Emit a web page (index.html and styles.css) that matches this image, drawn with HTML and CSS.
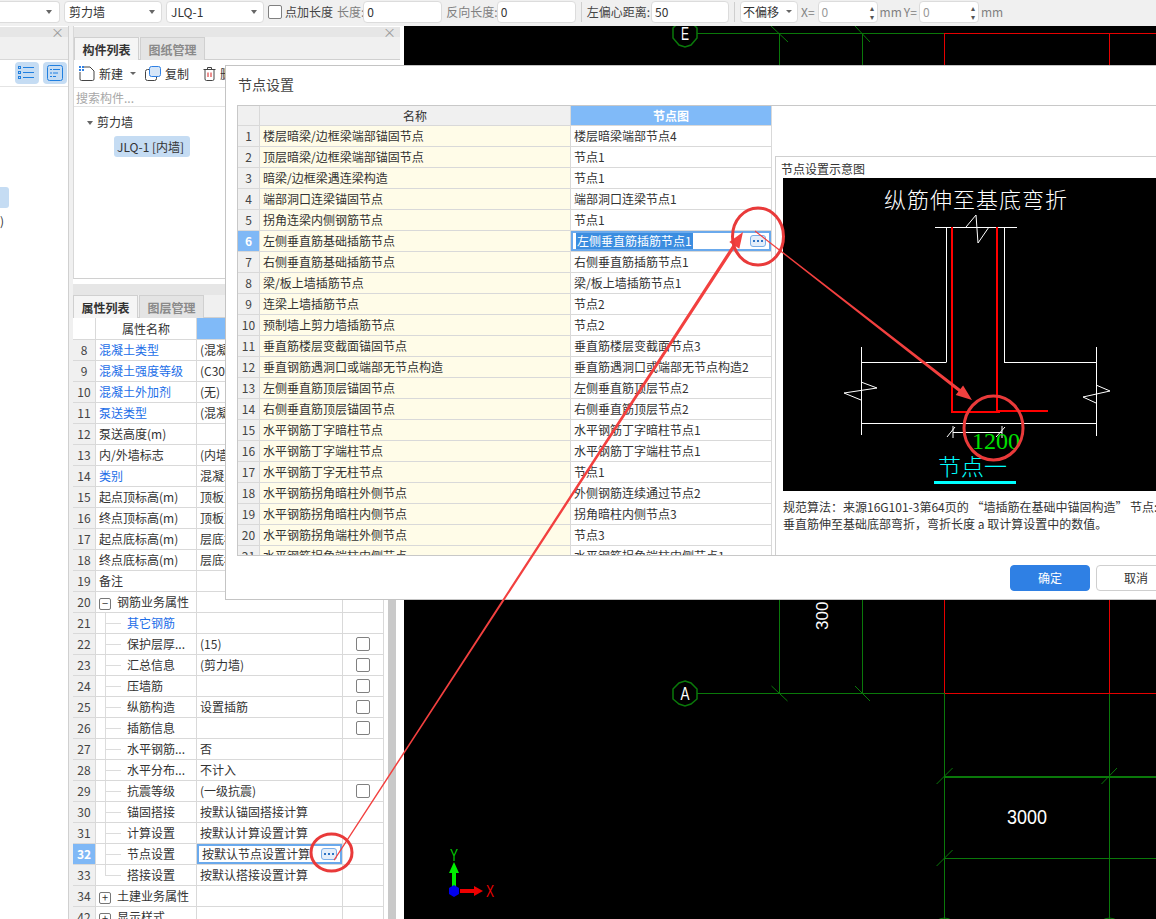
FILE: index.html
```html
<!DOCTYPE html>
<html lang="zh">
<head>
<meta charset="utf-8">
<title>节点设置</title>
<link rel="stylesheet" href="styles.css">
</head>
<body>
<div class="app">
  <div class="toolbar">
    <div class="sel sel-first"><span class="caret"></span></div>
    <div class="sel sel-w"><span>剪力墙</span><span class="caret"></span></div>
    <div class="sel sel-w"><span>JLQ-1</span><span class="caret"></span></div>
    <span class="chk"></span>
    <span class="tb-label tight">点加长度</span>
    <span class="tb-label dim gap-s">长度:</span>
    <div class="inp w-len">0</div>
    <span class="tb-label dim gap-s">反向长度:</span>
    <div class="inp w-rev">0</div>
    <span class="tb-sep"></span>
    <span class="tb-label gap-o">左偏心距离:</span>
    <div class="inp w-off">50</div>
    <span class="tb-sep"></span>
    <div class="sel sel-off"><span>不偏移</span><span class="caret small"></span></div>
    <span class="tb-label dim gap-x">X=</span>
    <div class="inp spin"><span>0</span><span class="arrows">▴<br>▾</span></div>
    <span class="tb-label dim gap-mm">mm</span>
    <span class="tb-label dim gap-y">Y=</span>
    <div class="inp spin"><span>0</span><span class="arrows">▴<br>▾</span></div>
    <span class="tb-label dim gap-m">mm</span>
  </div>

  <div class="main">
    <aside class="side-left">
      <div class="panel-head"><span class="close">×</span></div>
      <div class="tabs-empty"></div>
      <div class="left-tools">
        <span class="view-btn">
          <svg width="18" height="14" viewBox="0 0 18 14"><g fill="none" stroke="#1f7fe0"><rect x="0.5" y="0.5" width="2" height="2"/><rect x="0.5" y="5.5" width="2" height="2"/><rect x="0.5" y="10.5" width="2" height="2"/><path d="M5 1.5h11M5 6.5h11M5 11.5h11"/></g></svg>
        </span>
        <span class="view-btn">
          <svg width="16" height="16" viewBox="0 0 16 16"><g fill="none" stroke="#1f7fe0"><rect x="0.5" y="0.5" width="15" height="15" rx="2"/><path d="M3 4.5h2M6 4.5h7M3 8h2M6 8h5M3 11.5h2M6 11.5h3"/></g></svg>
        </span>
      </div>
      <div class="left-body">
        <div class="left-sel"></div>
        <div class="left-frag">)</div>
      </div>
    </aside>

    <section class="side-mid">
      <div class="panel-top">
        <div class="panel-head"><span class="close">×</span></div>
        <div class="tabs">
          <span class="tab on">构件列表</span>
          <span class="tab off">图纸管理</span>
        </div>
        <div class="tools">
          <svg width="16" height="15" viewBox="0 0 16 15"><path d="M1 6V13a1.5 1.5 0 0 0 1.5 1.5H13.500a1.500 1.500 0 0 0 1.500-1.500V5L11 1H5" fill="none" stroke="#444"/><path d="M0 0h2v2H0zM3 0h2v2H3zM0 3h2v2H0zM3 3h2v2H3z" fill="#2f80e4"/></svg>
          <span class="tool-text">新建</span>
          <span class="caret small tool-caret"></span>
          <svg class="tool-ic2" width="16" height="15" viewBox="0 0 16 15"><rect x="0.5" y="3.5" width="11" height="11" rx="2" fill="#fff" stroke="#444"/><rect x="4.5" y="0.5" width="11" height="10" rx="2" fill="#d6e6f8" stroke="#2f80e4"/></svg>
          <span class="tool-text">复制</span>
          <svg class="tool-ic3" width="13" height="15" viewBox="0 0 13 15"><path d="M0.500 3.500h12M4.500 3V1.500h4V3M2 3.500v9.500a1.500 1.500 0 0 0 1.500 1.500h6a1.500 1.500 0 0 0 1.500-1.500V3.500" fill="none" stroke="#444"/><path d="M5 6.500v4.500M8 6.500v4.500" stroke="#d92020"/></svg>
          <span class="tool-text">删除</span>
        </div>
        <div class="search">搜索构件...</div>
        <div class="tree">
          <div class="tree-root"><span class="caret small"></span>剪力墙</div>
          <div class="tree-leaf">JLQ-1 [内墙]</div>
        </div>
      </div>
      <div class="panel-head head-gap"></div>
      <div class="tabs tabs-prop">
        <span class="tab on">属性列表</span>
        <span class="tab off">图层管理</span>
      </div>
      <div class="prop-wrap">
        <table class="prop">
          <colgroup><col class="pc-n"><col class="pc-a"><col class="pc-v"><col class="pc-c"></colgroup>
          <tr class="ph"><th class="blank"></th><th>属性名称</th><th class="hl">属性值</th><th class="blank">附加</th></tr>
          <tr><td class="n">8</td><td class="lnk">混凝土类型</td><td>(混凝土20石子)</td><td></td></tr>
          <tr><td class="n">9</td><td class="lnk">混凝土强度等级</td><td>(C30)</td><td></td></tr>
          <tr><td class="n">10</td><td class="lnk">混凝土外加剂</td><td>(无)</td><td></td></tr>
          <tr><td class="n">11</td><td class="lnk">泵送类型</td><td>(混凝土泵)</td><td></td></tr>
          <tr><td class="n">12</td><td>泵送高度(m)</td><td></td><td></td></tr>
          <tr><td class="n">13</td><td>内/外墙标志</td><td>(内墙)</td><td></td></tr>
          <tr><td class="n">14</td><td class="lnk">类别</td><td>混凝土墙</td><td></td></tr>
          <tr><td class="n">15</td><td>起点顶标高(m)</td><td>顶板顶标高</td><td></td></tr>
          <tr><td class="n">16</td><td>终点顶标高(m)</td><td>顶板顶标高</td><td></td></tr>
          <tr><td class="n">17</td><td>起点底标高(m)</td><td>层底标高</td><td></td></tr>
          <tr><td class="n">18</td><td>终点底标高(m)</td><td>层底标高</td><td></td></tr>
          <tr><td class="n">19</td><td>备注</td><td></td><td></td></tr>
          <tr><td class="n">20</td><td class="sec"><span class="box">−</span>钢筋业务属性</td><td></td><td></td></tr>
          <tr><td class="n">21</td><td class="sub lnk">其它钢筋</td><td></td><td></td></tr>
          <tr><td class="n">22</td><td class="sub">保护层厚...</td><td>(15)</td><td class="c"><span class="chk"></span></td></tr>
          <tr><td class="n">23</td><td class="sub">汇总信息</td><td>(剪力墙)</td><td class="c"><span class="chk"></span></td></tr>
          <tr><td class="n">24</td><td class="sub">压墙筋</td><td></td><td class="c"><span class="chk"></span></td></tr>
          <tr><td class="n">25</td><td class="sub">纵筋构造</td><td>设置插筋</td><td class="c"><span class="chk"></span></td></tr>
          <tr><td class="n">26</td><td class="sub">插筋信息</td><td></td><td class="c"><span class="chk"></span></td></tr>
          <tr><td class="n">27</td><td class="sub">水平钢筋...</td><td>否</td><td></td></tr>
          <tr><td class="n">28</td><td class="sub">水平分布...</td><td>不计入</td><td></td></tr>
          <tr><td class="n">29</td><td class="sub">抗震等级</td><td>(一级抗震)</td><td class="c"><span class="chk"></span></td></tr>
          <tr><td class="n">30</td><td class="sub">锚固搭接</td><td>按默认锚固搭接计算</td><td></td></tr>
          <tr><td class="n">31</td><td class="sub">计算设置</td><td>按默认计算设置计算</td><td></td></tr>
          <tr><td class="n act">32</td><td class="sub">节点设置</td><td class="edit"><div class="edit-in"><span>按默认节点设置计算</span><span class="dots"><i></i><i></i><i></i></span></div></td><td></td></tr>
          <tr><td class="n">33</td><td class="sub last">搭接设置</td><td>按默认搭接设置计算</td><td></td></tr>
          <tr><td class="n">34</td><td class="sec"><span class="box">+</span>土建业务属性</td><td></td><td></td></tr>
          <tr><td class="n">42</td><td class="sec"><span class="box">+</span>显示样式</td><td></td><td></td></tr>
        </table>
        <div class="vbar"></div>
      </div>
    </section>

    <div class="canvas">
      <svg class="cad" width="752" height="893" viewBox="404 26 752 893">
        <g stroke="#0a780a" stroke-width="1" fill="none">
          <path d="M697 33.5H945M697 693.5H945M779.5 33V693M862.5 33V693M944.5 693V919M1109.5 693V919M945 776.5H1156M945 858.5H1156"/>
          <path d="M945 777.5H1156"/>
          <path d="M771 26L788 42M855 26L870 42M771.5 686L787.5 701M855 686L870 701M936.6 784L952.6 768M1101.5 784L1117 768M936.6 866L952.6 850"/>
          <polygon stroke-width="1.5" points="680,21 690,21 697,28 697,38 691,45 685,47 679,45 673,38 673,28"/>
          <polygon stroke-width="1.5" points="685,681 691,683 697,689 697,699 691,704 685,706 679,704 673,699 673,689 679,683"/>
          <circle cx="944.5" cy="930" r="12"/>
          <circle cx="1109.5" cy="930" r="12"/>
        </g>
        <g stroke="#e60000" stroke-width="1" fill="none">
          <path d="M945 33.5H1156M945 693.5H1156M944.5 33V693M1109.5 33V693"/>
        </g>
        <g class="cad-text" fill="#fff">
          <text x="681" y="40" font-size="19" textLength="8" lengthAdjust="spacingAndGlyphs">E</text>
          <text x="680.5" y="700" font-size="19" textLength="9" lengthAdjust="spacingAndGlyphs">A</text>
          <text x="1007" y="824" font-size="20" textLength="40" lengthAdjust="spacingAndGlyphs">3000</text>
          <text transform="translate(828,630) rotate(-90)" font-size="17">300</text>
        </g>
        <path d="M452 873h4v15h-4z" fill="#00ee00"/>
        <path d="M454 862l5 11h-10z" fill="#00ee00"/>
        <path d="M460 889h14v4h-14z" fill="#ee0000"/>
        <path d="M483 891l-9 5v-10z" fill="#ee0000"/>
        <polygon points="454,885 459,888 459,894 454,897 449,894 449,888" fill="#0000ee"/>
        <text class="cad-text" x="486" y="897" font-size="16" fill="#ee0000" textLength="8" lengthAdjust="spacingAndGlyphs">X</text>
        <text class="cad-text" x="450" y="861" font-size="16" fill="#00cc00" textLength="8" lengthAdjust="spacingAndGlyphs">Y</text>
      </svg>
    </div>
  </div>

  <div class="dialog">
    <div class="dlg-title">节点设置</div>
    <div class="dlg-body">
      <div class="grid-wrap">
        <table class="grid">
          <colgroup><col class="gc-n"><col class="gc-a"><col class="gc-b"></colgroup>
          <tr class="gh"><th></th><th>名称</th><th class="hl">节点图</th></tr>
          <tr><td class="n">1</td><td class="y">楼层暗梁/边框梁端部锚固节点</td><td>楼层暗梁端部节点4</td></tr>
          <tr><td class="n">2</td><td class="y">顶层暗梁/边框梁端部锚固节点</td><td>节点1</td></tr>
          <tr><td class="n">3</td><td class="y">暗梁/边框梁遇连梁构造</td><td>节点1</td></tr>
          <tr><td class="n">4</td><td class="y">端部洞口连梁锚固节点</td><td>端部洞口连梁节点1</td></tr>
          <tr><td class="n">5</td><td class="y">拐角连梁内侧钢筋节点</td><td>节点1</td></tr>
          <tr><td class="n act">6</td><td class="y">左侧垂直筋基础插筋节点</td><td class="edit"><div class="edit-in"><span class="picked">左侧垂直筋插筋节点1</span><span class="dots"><i></i><i></i><i></i></span></div></td></tr>
          <tr><td class="n">7</td><td class="y">右侧垂直筋基础插筋节点</td><td>右侧垂直筋插筋节点1</td></tr>
          <tr><td class="n">8</td><td class="y">梁/板上墙插筋节点</td><td>梁/板上墙插筋节点1</td></tr>
          <tr><td class="n">9</td><td class="y">连梁上墙插筋节点</td><td>节点2</td></tr>
          <tr><td class="n">10</td><td class="y">预制墙上剪力墙插筋节点</td><td>节点2</td></tr>
          <tr><td class="n">11</td><td class="y">垂直筋楼层变截面锚固节点</td><td>垂直筋楼层变截面节点3</td></tr>
          <tr><td class="n">12</td><td class="y">垂直钢筋遇洞口或端部无节点构造</td><td>垂直筋遇洞口或端部无节点构造2</td></tr>
          <tr><td class="n">13</td><td class="y">左侧垂直筋顶层锚固节点</td><td>左侧垂直筋顶层节点2</td></tr>
          <tr><td class="n">14</td><td class="y">右侧垂直筋顶层锚固节点</td><td>右侧垂直筋顶层节点2</td></tr>
          <tr><td class="n">15</td><td class="y">水平钢筋丁字暗柱节点</td><td>水平钢筋丁字暗柱节点1</td></tr>
          <tr><td class="n">16</td><td class="y">水平钢筋丁字端柱节点</td><td>水平钢筋丁字端柱节点1</td></tr>
          <tr><td class="n">17</td><td class="y">水平钢筋丁字无柱节点</td><td>节点1</td></tr>
          <tr><td class="n">18</td><td class="y">水平钢筋拐角暗柱外侧节点</td><td>外侧钢筋连续通过节点2</td></tr>
          <tr><td class="n">19</td><td class="y">水平钢筋拐角暗柱内侧节点</td><td>拐角暗柱内侧节点3</td></tr>
          <tr><td class="n">20</td><td class="y">水平钢筋拐角端柱外侧节点</td><td>节点3</td></tr>
          <tr><td class="n">21</td><td class="y">水平钢筋拐角端柱内侧节点</td><td>水平钢筋拐角端柱内侧节点1</td></tr>
        </table>
        <div class="preview">
          <div class="pv-title">节点设置示意图</div>
          <svg class="pv-img" width="373" height="313" viewBox="783 178 373 313">
            <rect x="783" y="178" width="373" height="313" fill="#000"/>
            <text class="pv-head" x="976" y="208" text-anchor="middle">纵筋伸至基底弯折</text>
            <g stroke="#fff" stroke-width="1" fill="none">
              <path d="M935 227.5H1017M946.5 227V362.5M1004.5 227V362.5M861 362.5H946M1004 362.5H1096M861.5 347V435M1096.5 347V436M861 423.5H1096M953 432.5H1002"/>
              <path d="M966 227L976 215L978 243L989 227"/>
              <path d="M861 382L877 388L844 393L861 400M1096 385L1110 391L1083 397L1096 403"/>
              <path d="M947 437L955 427M996 437L1005 427M953 426V438M1002 426V438"/>
            </g>
            <path d="M952 227V412H999V411M997 227V411H1048" stroke="#f00" stroke-width="2" fill="none"/>
            <text class="pv-dim" x="996" y="449" text-anchor="middle">1200</text>
            <text class="pv-node" x="972.5" y="475" text-anchor="middle">节点一</text>
            <rect x="934" y="481" width="82" height="3" fill="#0ff"/>
          </svg>
          <div class="pv-desc">规范算法：来源16G101-3第64页的 “墙插筋在基础中锚固构造” 节点:</div>
          <div class="pv-desc">垂直筋伸至基础底部弯折，弯折长度 a 取计算设置中的数值。</div>
        </div>
      </div>
    </div>
    <div class="dlg-foot">
      <span class="btn primary">确定</span>
      <span class="btn">取消</span>
    </div>
  </div>

  <svg class="marks" width="1156" height="919" viewBox="0 0 1156 919">
    <g fill="#f2403f">
      <polygon points="333.6,859.8 732.9,244.5 729.3,242.1 743,232 739.3,248.7 735.7,246.3 334.6,860.4"/>
      <polygon points="755.3,230.6 960.4,388.9 963.1,385.5 972,400 955.7,394.9 958.4,391.5 754.7,231.4"/>
    </g>
    <g fill="none" stroke="#e93a3a" stroke-width="3">
      <ellipse cx="331.5" cy="852.5" rx="20.5" ry="18.5"/>
      <ellipse cx="758" cy="236.5" rx="25.5" ry="28.5"/>
      <ellipse cx="993.5" cy="428" rx="29.5" ry="32"/>
    </g>
  </svg>
</div>
</body>
</html>
```

FILE: styles.css
```css
* { box-sizing: border-box; }
html, body { margin: 0; padding: 0; }
body {
  width: 1156px;
  height: 919px;
  overflow: hidden;
  font-family: "Noto Sans CJK SC", "Noto Sans", sans-serif;
  font-size: 12px;
  color: #333;
  background: #f0f0f0;
}
.app {
  position: relative;
  width: 1156px;
  height: 919px;
  overflow: hidden;
  display: flex;
  flex-direction: column;
}

/* top toolbar */
.toolbar {
  height: 26px;
  flex: none;
  display: flex;
  align-items: center;
  gap: 4px;
  padding-bottom: 3px;
  background: #f0f0f0;
  white-space: nowrap;
  line-height: 22px;
}
.sel, .inp {
  height: 22px;
  background: #fff;
  border: 1px solid #dcdcdc;
  border-radius: 4px;
  display: flex;
  align-items: center;
  justify-content: space-between;
  padding: 0 3px;
  flex: none;
}
.sel-first { width: 60px; border-left: 0; border-radius: 0 4px 4px 0; justify-content: flex-end; }
.sel-w { width: 98px; padding: 0 6px 0 4px; }
.sel-off { width: 58px; padding: 0 5px 0 2px; }
.caret {
  display: inline-block;
  width: 0;
  height: 0;
  border-left: 3px solid transparent;
  border-right: 3px solid transparent;
  border-top: 4px solid #666;
}
.sel-first .caret { margin-right: 4px; }
.caret.small { border-top-width: 3px; }
.chk {
  display: inline-block;
  width: 14px;
  height: 14px;
  background: #fff;
  border: 1px solid #808080;
  border-radius: 2px;
  flex: none;
}
.tb-label { color: #444; flex: none; }
.tb-label.dim { color: #808080; }
.tight { margin-left: -1px; }
.gap-s { margin-right: -5px; }
.gap-o { margin-right: -3px; }
.gap-x { margin-left: -1px; margin-right: -1px; }
.gap-mm { margin-left: -2px; margin-right: -2px; }
.gap-y { margin-right: -2px; }
.gap-m { margin-left: -2px; }
.w-len, .w-rev { width: 79px; }
.w-off { width: 78px; }
.spin { width: 60px; color: #999; }
.arrows { font-size: 8px; line-height: 9px; color: #555; text-align: center; }
.tb-sep { width: 1px; height: 20px; background: #cfcfcf; flex: none; margin: 0 1px; }

/* main row */
.main { flex: 1; min-height: 0; display: flex; }
.panel-head {
  height: 10px;
  margin-top: 1px;
  background: #e6e6e6;
  position: relative;
  flex: none;
}
.close {
  position: absolute;
  right: 4px;
  top: -2px;
  font-size: 13px;
  line-height: 14px;
  color: #999;
}

.side-left {
  width: 69px;
  flex: none;
  background: #fff;
  border-right: 1px solid #d0d0d0;
  display: flex;
  flex-direction: column;
}
.tabs-empty { height: 23px; background: #f0f0f0; border-bottom: 1px solid #d8d8d8; flex: none; }
.left-tools {
  height: 27px;
  flex: none;
  display: flex;
  gap: 4px;
  justify-content: flex-end;
  align-items: center;
  padding-right: 1px;
  border-bottom: 1px solid #e4e4e4;
}
.view-btn {
  width: 24px;
  height: 22px;
  background: #c5dcf3;
  border-radius: 4px;
  display: flex;
  align-items: center;
  justify-content: center;
}
.left-body { flex: 1; padding-top: 100px; }
.left-sel { width: 9px; height: 21px; background: #c5dcf3; border-radius: 0 3px 3px 0; }
.left-frag { line-height: 16px; margin-top: 5px; }

.side-mid {
  width: 331px;
  margin-left: 4px;
  flex: none;
  background: #fff;
  display: flex;
  flex-direction: column;
  min-height: 0;
}
.panel-top {
  height: 253px;
  flex: none;
  display: flex;
  flex-direction: column;
  border-bottom: 1px solid #d0d0d0;
  border-left: 1px solid #d8d8d8;
  margin-right: 4px;
}
.head-gap { height: 11px; margin-top: 5px; margin-right: 4px; }
.tabs {
  height: 23px;
  flex: none;
  display: flex;
  gap: 1px;
  background: #f0f0f0;
  border-bottom: 1px solid #d0d0d0;
}
.tabs-prop { margin-right: 4px; }
.tab {
  width: 65px;
  height: 23px;
  line-height: 23px;
  text-align: center;
  font-size: 12px;
  font-weight: 700;
  border: 1px solid #d0d0d0;
  border-bottom: 0;
}
.tab.on { background: #f5f5f5; color: #333; }
.tab.off { background: #e4e4e4; color: #8a8a8a; }
.tools {
  height: 28px;
  flex: none;
  display: flex;
  align-items: center;
  padding-left: 5px;
  border-bottom: 1px solid #e4e4e4;
  white-space: nowrap;
  overflow: hidden;
}
.tool-text { margin-left: 4px; }
.tool-caret { margin-left: 7px; }
.tool-ic2 { margin-left: 9px; }
.tool-ic3 { margin-left: 14px; }
.search {
  height: 19px;
  line-height: 19px;
  flex: none;
  padding-left: 2px;
  color: #a8a8a8;
  border-bottom: 1px solid #e4e4e4;
}
.tree { padding-top: 4px; }
.tree-root { height: 22px; line-height: 22px; padding-left: 13px; }
.tree-root .caret { margin-right: 4px; vertical-align: 2px; border-top-width: 4px; }
.tree-leaf {
  width: 76px;
  height: 21px;
  line-height: 21px;
  margin: 3px 0 0 40px;
  padding-left: 3px;
  background: #c5dcf3;
  border-radius: 3px;
  white-space: nowrap;
}

/* property table */
.prop-wrap { flex: 1; min-height: 0; display: flex; overflow: hidden; }
.prop, .grid {
  table-layout: fixed;
  border-collapse: separate;
  border-spacing: 0;
  flex: none;
}
.prop { width: 311px; align-self: flex-start; }
.pc-n { width: 23px; }
.pc-a { width: 101px; }
.pc-v { width: 146px; }
.pc-c { width: 41px; }
.prop tr, .grid tr { height: 21px; }
.prop .ph { height: 22px; }
.prop th, .grid th {
  font-weight: 400;
  padding: 0;
  text-align: center;
  border-right: 1px solid #d9d9d9;
  border-bottom: 1px solid #d9d9d9;
  white-space: nowrap;
  overflow: hidden;
  line-height: 18px;
}
.prop td, .grid td {
  padding: 0 0 0 3px;
  border-right: 1px solid #d9d9d9;
  border-bottom: 1px solid #d9d9d9;
  white-space: nowrap;
  overflow: hidden;
  line-height: 18px;
  position: relative;
}
.prop th.blank { color: transparent; background: #fff; }
th.hl { background: #80baf8; color: #fff; }
.prop td.n, .grid td.n {
  background: #f0f0f0;
  text-align: center;
  padding: 0;
  color: #444;
}
td.n.act { background: #7fb8f6 !important; color: #fff !important; font-weight: 700; }
td.lnk { color: #1c6ee8; }
td.c { text-align: center; padding: 0; }
td.c .chk { display: block; margin: 0 auto; }
.prop td.sec { padding-left: 3px; }
.box {
  display: inline-block;
  width: 12px;
  height: 12px;
  line-height: 9px;
  text-align: center;
  border: 1px solid #777;
  border-radius: 2px;
  font-size: 11px;
  margin-right: 6px;
  vertical-align: -1px;
}
.prop td.sub { padding-left: 31px; }
.prop td.sub::before {
  content: "";
  position: absolute;
  left: 9px;
  top: 0;
  bottom: 0;
  border-left: 1px solid #dcdcdc;
}
.prop td.sub.last::before { bottom: 10px; }
.prop td.sub::after {
  content: "";
  position: absolute;
  left: 9px;
  width: 16px;
  top: 10px;
  border-top: 1px solid #dcdcdc;
}
td.edit { padding: 0 !important; }
.edit-in {
  height: 20px;
  border: 2px solid #6aa9ec;
  display: flex;
  align-items: center;
  justify-content: space-between;
  padding: 0 3px;
  background: #fff;
  line-height: 16px;
}
.picked { background: #3b8de0; color: #fff; padding: 0 1px; line-height: 16px; }
.dots {
  width: 16px;
  height: 12px;
  flex: none;
  display: flex;
  align-items: center;
  justify-content: center;
  gap: 2px;
  background: #e4eefa;
  border: 1px solid #7aaee8;
  border-radius: 3px;
}
.dots i { width: 2px; height: 2px; background: #2f74c4; display: block; }
.vbar { width: 8px; margin-left: 4px; background: #c9c9c9; flex: none; }

/* canvas */
.canvas { flex: 1; min-width: 0; background: #000; }
.cad { display: block; }
.cad-text { font-family: "Liberation Sans", sans-serif; }

/* dialog */
.dialog {
  position: absolute;
  left: 225px;
  top: 65px;
  width: 1000px;
  height: 535px;
  background: #fff;
  border: 1px solid #c4c4c4;
  display: flex;
  flex-direction: column;
}
.dlg-title {
  height: 39px;
  flex: none;
  padding: 8px 0 0 12px;
  font-size: 14px;
  line-height: 20px;
  color: #444;
}
.dlg-body { height: 451px; flex: none; padding: 0 0 0 11px; }
.grid-wrap {
  height: 451px;
  overflow: hidden;
  display: flex;
  align-items: flex-start;
  border: 1px solid #c8c8c8;
}
.grid { width: 534px; }
.gc-n { width: 22px; }
.gc-a { width: 311px; }
.gc-b { width: 201px; }
.grid .gh { height: 20px; }
.grid th { background: #f0f0f0; }
.grid th.hl { background: #80baf8; font-weight: 700; }
.grid td.y { background: #fffce8; padding-left: 3px; }
.preview {
  width: 430px;
  height: 400px;
  margin: 50px 0 0 3px;
  flex: none;
  border: 1px solid #cfcfcf;
  padding: 4px 0 0 7px;
}
.pv-title { line-height: 16px; height: 17px; margin-left: -2px; }
.pv-img { display: block; }
.pv-head { font-size: 22px; letter-spacing: 1px; fill: #fff; font-family: "Noto Sans CJK SC", sans-serif; font-weight: 300; }
.pv-dim { font-size: 24px; fill: #00e000; font-family: "Liberation Serif", serif; }
.pv-node { font-size: 23px; fill: #0ff; font-family: "Noto Sans CJK SC", sans-serif; font-weight: 300; }
.pv-desc { white-space: nowrap; line-height: 17px; }
.pv-img + .pv-desc { margin-top: 7px; }
.dlg-foot {
  flex: 1;
  display: flex;
  align-items: center;
  gap: 6px;
  padding-left: 784px;
}
.btn {
  width: 80px;
  height: 26px;
  line-height: 24px;
  text-align: center;
  background: #fff;
  border: 1px solid #cfcfcf;
  border-radius: 4px;
  color: #333;
  flex: none;
}
.btn.primary { background: #2f80e4; border-color: #2f80e4; color: #fff; }

/* hand-drawn red annotations over the screenshot */
.marks { position: absolute; left: 0; top: 0; pointer-events: none; }
```
